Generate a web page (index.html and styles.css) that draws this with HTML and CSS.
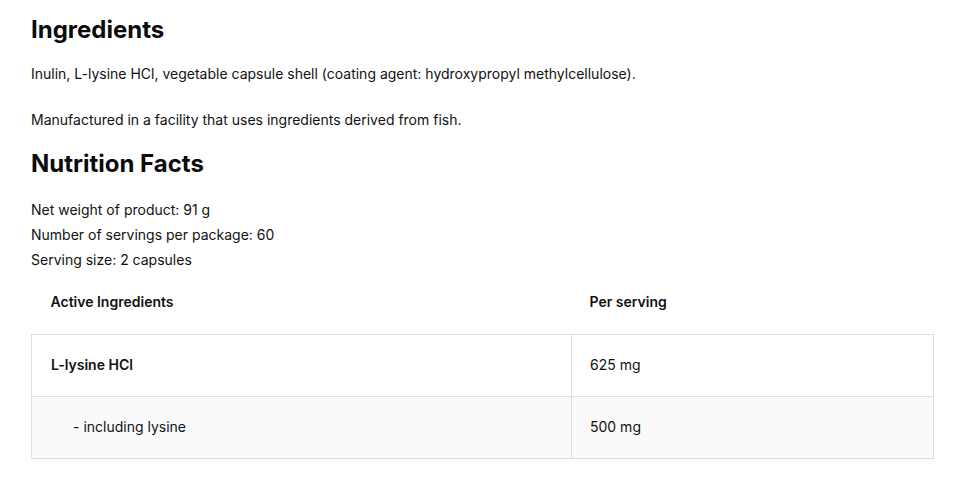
FILE: index.html
```html
<!DOCTYPE html>
<html>
<head>
<meta charset="utf-8">
<link rel="stylesheet" href="styles.css">
</head>
<body>
<main class="page">
  <h2 class="title">Ingredients</h2>
  <p class="para">Inulin, L-lysine HCl, vegetable capsule shell (coating agent: hydroxypropyl methylcellulose).</p>
  <p class="para">Manufactured in a facility that uses ingredients derived from fish.</p>
  <h2 class="title title-nutrition">Nutrition Facts</h2>
  <ul class="facts">
    <li>Net weight of product: 91 g</li>
    <li>Number of servings per package: 60</li>
    <li>Serving size: 2 capsules</li>
  </ul>
  <table class="nt">
    <thead>
      <tr><th class="c1">Active Ingredients</th><th class="c2">Per serving</th></tr>
    </thead>
    <tbody>
      <tr><td class="c1 strong">L-lysine HCl</td><td class="c2">625 mg</td></tr>
      <tr class="alt"><td class="c1 indent">- including lysine</td><td class="c2">500 mg</td></tr>
    </tbody>
  </table>
</main>
</body>
</html>
```
FILE: styles.css
```css
* { box-sizing: border-box; }
body {
  margin: 0;
  background: #fff;
  color: #111;
  font-family: Inter, "Liberation Sans", Arial, sans-serif;
}
.page {
  padding: 15px 36px 0 31px;
}
.title {
  margin: 0;
  font-size: 24px;
  line-height: 30px;
  font-weight: 700;
  color: #0b0b0b;
}
.para {
  margin: 18px 0 0;
  font-size: 14px;
  line-height: 22px;
}
.para + .para { margin-top: 24px; }
.title-nutrition { margin-top: 18px; }
.facts {
  list-style: none;
  margin: 18px 0 0;
  padding: 0;
  font-size: 14px;
  line-height: 25px;
}
.nt {
  width: 903px;
  border-collapse: collapse;
  font-size: 14px;
}
.nt th, .nt td {
  height: 62px;
  padding: 0 18px 2px;
  text-align: left;
  vertical-align: middle;
}
.nt th { font-weight: 600; }
.nt td { border: 1px solid #dedede; }
.nt .c1 { width: 540px; padding-left: 19px; }
.nt .strong { font-weight: 600; }
.nt .indent { padding-left: 41px; }
.nt .alt td { background: #fafafa; }
```
